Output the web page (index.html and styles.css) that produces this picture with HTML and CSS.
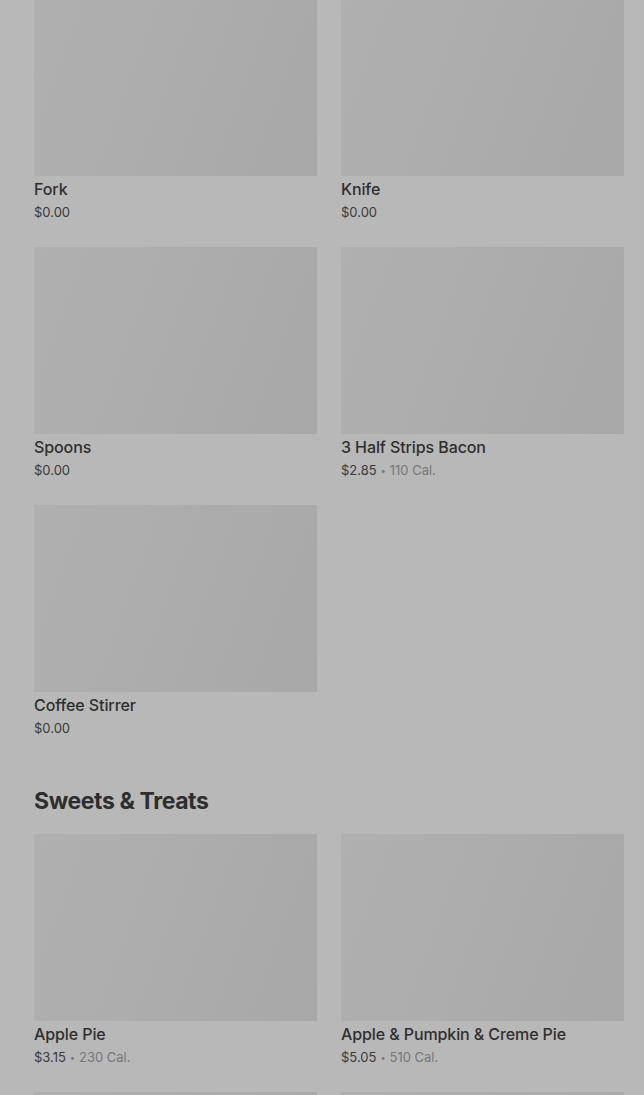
FILE: index.html
```html
<!DOCTYPE html>
<html lang="en">
<head>
  <meta charset="UTF-8" />
  <meta name="viewport" content="width=device-width, initial-scale=1.0" />
  <title>Menu</title>
  <link rel="stylesheet" href="styles.css">
</head>
<body>
  <div class="menu">
    <section class="section">
      <div class="grid">
        <div class="item">
          <div class="thumb"></div>
          <div class="name">Fork</div>
          <div class="meta"><span class="price">$0.00</span></div>
        </div>
        <div class="item">
          <div class="thumb"></div>
          <div class="name">Knife</div>
          <div class="meta"><span class="price">$0.00</span></div>
        </div>
        <div class="item">
          <div class="thumb"></div>
          <div class="name">Spoons</div>
          <div class="meta"><span class="price">$0.00</span></div>
        </div>
        <div class="item">
          <div class="thumb"></div>
          <div class="name">3 Half Strips Bacon</div>
          <div class="meta"><span class="price">$2.85</span><span class="dot">•</span><span class="cal">110 Cal.</span></div>
        </div>
        <div class="item">
          <div class="thumb"></div>
          <div class="name">Coffee Stirrer</div>
          <div class="meta"><span class="price">$0.00</span></div>
        </div>
      </div>
    </section>

    <section class="section">
      <h2 class="section-title">Sweets &amp; Treats</h2>
      <div class="grid">
        <div class="item">
          <div class="thumb"></div>
          <div class="name">Apple Pie</div>
          <div class="meta"><span class="price">$3.15</span><span class="dot">•</span><span class="cal">230 Cal.</span></div>
        </div>
        <div class="item">
          <div class="thumb"></div>
          <div class="name">Apple &amp; Pumpkin &amp; Creme Pie</div>
          <div class="meta"><span class="price">$5.05</span><span class="dot">•</span><span class="cal">510 Cal.</span></div>
        </div>
        <div class="item">
          <div class="thumb"></div>
          <div class="name">&nbsp;</div>
          <div class="meta">&nbsp;</div>
        </div>
        <div class="item">
          <div class="thumb"></div>
          <div class="name">&nbsp;</div>
          <div class="meta">&nbsp;</div>
        </div>
      </div>
    </section>
  </div>
</body>
</html>
```

FILE: styles.css
```css
html, body { margin: 0; padding: 0; }
body {
  font-family: Inter, "Noto Sans", Arial, sans-serif;
  background-color: #b8b8b8;
  color: #2f2f2f;
  height: 1095px;
  overflow: hidden;
}
.menu { padding: 0 20px 0 34px; margin-top: -11px; }
.section + .section { margin-top: 46px; }
.section-title {
  margin: 0 0 17px;
  font-size: 23px;
  line-height: 32px;
  font-weight: 700;
  letter-spacing: -0.4px;
  color: #2e2e2e;
}
.grid {
  display: grid;
  grid-template-columns: 1fr 1fr;
  grid-auto-rows: 234px;
  column-gap: 24px;
  row-gap: 24px;
}
.item { overflow: hidden; }
.thumb {
  height: 187px;
  background: linear-gradient(110deg, #b0b0b0 0%, #acacac 50%, #a8a8a8 100%);
}
.name {
  margin-top: 3px;
  font-size: 16px;
  line-height: 20px;
  font-weight: 500;
  letter-spacing: -0.1px;
  color: #2f2f2f;
}
.meta {
  margin-top: 3px;
  font-size: 13px;
  line-height: 20px;
  color: #3a3a3a;
}
.dot { margin: 0 4px; font-size: 9px; color: #777; vertical-align: 1px; }
.cal { color: #777; }
```
